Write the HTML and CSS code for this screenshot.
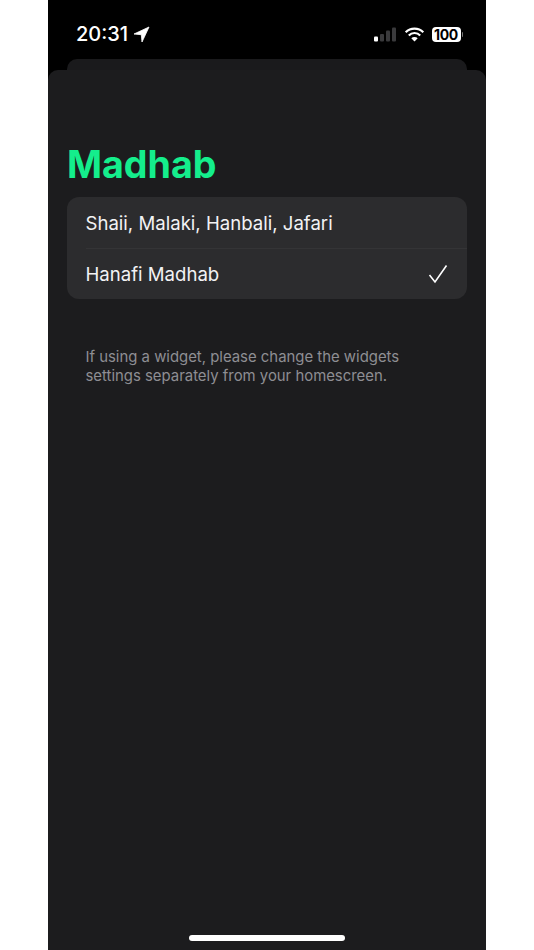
FILE: index.html
```html
<!DOCTYPE html>
<html lang="en">
<head>
    <meta charset="UTF-8">
    <meta name="viewport" content="width=device-width, initial-scale=1.0">
    <title>Madhab</title>
    <link rel="stylesheet" href="styles.css">
</head>
<body>
    <div class="phone">
        <div class="statusbar">
            <div class="status-left">
                <span class="time">20:31</span>
                <svg class="location" width="17" height="17" viewBox="0 0 17 17">
                    <path d="M16 1 L1 8 L8.3 8.7 L9 16 Z" fill="#fff" stroke="#fff" stroke-width="0.8" stroke-linejoin="round"/>
                </svg>
            </div>
            <div class="status-right">
                <svg width="23" height="15" viewBox="0 0 23 15">
                    <rect x="0" y="9.5" width="4" height="5" rx="1" fill="#fff"/>
                    <rect x="6" y="7" width="4" height="7.5" rx="1" fill="#3a3a3c"/>
                    <rect x="12" y="3.5" width="4" height="11" rx="1" fill="#3a3a3c"/>
                    <rect x="18" y="0.5" width="4" height="14" rx="1" fill="#3a3a3c"/>
                </svg>
                <svg class="wifi" width="21" height="15" viewBox="0 0 20 15">
                    <path d="M1.2 5.2 A12.5 12.5 0 0 1 18.8 5.2" fill="none" stroke="#fff" stroke-width="2.2"/>
                    <path d="M4.3 8.4 A8 8 0 0 1 15.7 8.4" fill="none" stroke="#fff" stroke-width="2.2"/>
                    <path d="M10 14.6 L6.8 11.2 A4.6 4.6 0 0 1 13.2 11.2 Z" fill="#fff"/>
                </svg>
                <div class="battery">
                    <span class="battery-body">100</span>
                    <span class="battery-cap"></span>
                </div>
            </div>
        </div>
        <div class="sheet-behind"></div>
        <div class="sheet">
            <h1>Madhab</h1>
            <div class="group">
                <div class="row">Shaii, Malaki, Hanbali, Jafari</div>
                <div class="row">
                    <span>Hanafi Madhab</span>
                    <svg class="check" width="20" height="20" viewBox="0 0 20 20">
                        <path d="M1.5 11 L7 18 L18.5 1.5" fill="none" stroke="#fff" stroke-width="1.6"/>
                    </svg>
                </div>
            </div>
            <p class="footnote">If using a widget, please change the widgets settings separately from your homescreen.</p>
            <div class="home-indicator"></div>
        </div>
    </div>
</body>
</html>
```

FILE: styles.css
```css
html, body {
    height: 100%;
}

body {
    margin: 0;
    background-color: #fff;
    font-family: Inter, "Liberation Sans", sans-serif;
    overflow: hidden;
}

.phone {
    width: 438px;
    height: 950px;
    margin: 0 auto;
    background-color: #000;
    display: flex;
    flex-direction: column;
}

.statusbar {
    height: 59px;
    flex-shrink: 0;
    display: flex;
    justify-content: space-between;
    align-items: flex-start;
    padding: 0 23px 0 28px;
    box-sizing: border-box;
    color: #fff;
}

.status-left {
    display: flex;
    align-items: center;
    gap: 5px;
    margin-top: 22px;
}

.time {
    font-size: 20px;
    font-weight: 500;
    line-height: 25px;
}

.status-right {
    display: flex;
    align-items: center;
    gap: 7px;
    margin-top: 27px;
}

.battery {
    display: flex;
    align-items: center;
    gap: 1px;
}

.battery-body {
    background-color: #fff;
    color: #000;
    font-size: 14px;
    font-weight: 700;
    line-height: 15px;
    border-radius: 4px;
    width: 29px;
    letter-spacing: -0.3px;
    text-align: center;
}

.battery-cap {
    width: 1.5px;
    height: 5px;
    background-color: #777;
    border-radius: 0 1px 1px 0;
}

.sheet-behind {
    height: 11px;
    flex-shrink: 0;
    margin: 0 19px;
    background-color: #1a1a1c;
    border-radius: 10px 10px 0 0;
}

.sheet {
    flex: 1;
    display: flex;
    flex-direction: column;
    background-color: #1c1c1e;
    border-radius: 10px 10px 0 0;
    padding: 0 19px;
}

h1 {
    margin: 73px 0 10px;
    color: #14ee8c;
    font-size: 37.6px;
    font-weight: 700;
    line-height: 44px;
}

.group {
    background-color: #2c2c2e;
    border-radius: 12px;
}

.row {
    height: 51px;
    box-sizing: border-box;
    padding: 0 19px 0 18.5px;
    display: flex;
    justify-content: space-between;
    align-items: center;
    color: #f2f2f4;
    font-size: 18.6px;
}

.row + .row {
    border-top: 1px solid #343436;
    margin-left: 18.5px;
    padding-left: 0;
}

.footnote {
    margin: 49px 0 0;
    padding: 0 19px 0 18.5px;
    color: #8e8e93;
    font-size: 14.9px;
    line-height: 19px;
}

.home-indicator {
    width: 156px;
    height: 6px;
    margin: auto auto 9px;
    background-color: #fff;
    border-radius: 3px;
}
```
